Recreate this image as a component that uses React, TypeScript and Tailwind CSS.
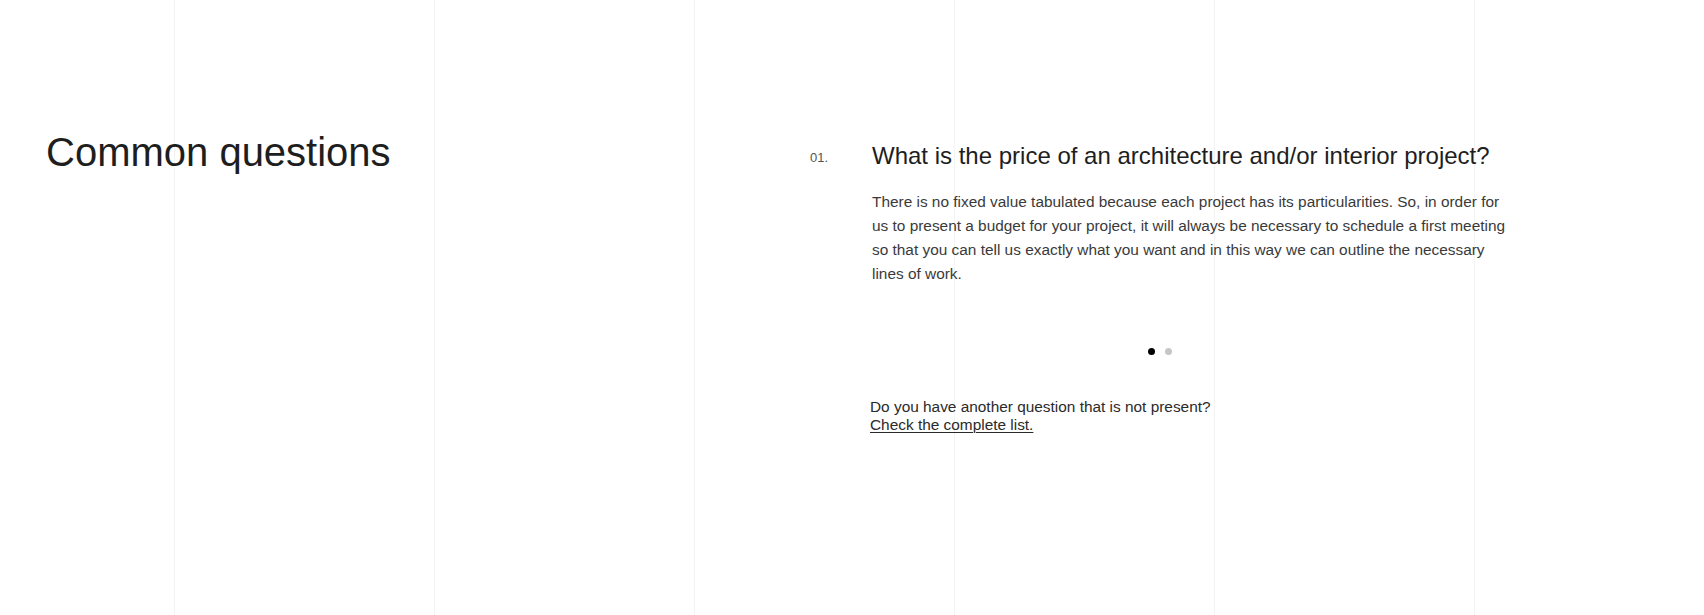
import React from "react";

const font = { fontFamily: '"Liberation Sans", Arial, sans-serif' };

export default function App() {
  return (
    <div className="relative w-full h-[615px] bg-white overflow-hidden" style={font}>
      {/* decorative grid lines behind the content */}
      <div className="absolute inset-0 flex pl-[174px] pointer-events-none">
        <div className="w-[260px] shrink-0 border-l border-[#f3f3f3]" />
        <div className="w-[260px] shrink-0 border-l border-[#f3f3f3]" />
        <div className="w-[260px] shrink-0 border-l border-[#f3f3f3]" />
        <div className="w-[260px] shrink-0 border-l border-[#f3f3f3]" />
        <div className="w-[260px] shrink-0 border-l border-[#f3f3f3]" />
        <div className="w-[260px] shrink-0 border-l border-[#f3f3f3]" />
      </div>

      <div className="relative flex pt-[128px] pl-[46px]">
        <div className="w-[764px] shrink-0">
          <h2 className="text-[40px] leading-[48px] text-[#1e1e1e] font-normal">Common questions</h2>
        </div>

        <div className="w-[700px] shrink-0 pt-[14px]">
          <div className="flex items-start">
            <span className="w-[62px] shrink-0 text-[13px] leading-[32px] text-[#555]">01.</span>
            <div className="w-[638px]">
              <h3 className="text-[24px] leading-[28.8px] text-[#1e1e1e] font-normal">
                What is the price of an architecture and/or interior project?
              </h3>
              <p className="mt-[19px] text-[15.4px] leading-[24px] text-[#3a3a3a]">
                There is no fixed value tabulated because each project has its particularities. So, in order for
                us to present a budget for your project, it will always be necessary to schedule a first meeting
                so that you can tell us exactly what you want and in this way we can outline the necessary lines
                of work.
              </p>
            </div>
          </div>

          <div className="mt-[62px] flex justify-center gap-[10px]">
            <span className="block w-[7px] h-[7px] rounded-full bg-black" />
            <span className="block w-[7px] h-[7px] rounded-full bg-[#c6c6c6]" />
          </div>

          <div className="mt-[43px] pl-[60px] text-[15.4px] leading-[18px] text-[#2a2a2a]">
            <p>Do you have another question that is not present?</p>
            <a href="#" className="underline underline-offset-2 decoration-1 text-[#2a2a2a]">
              Check the complete list.
            </a>
          </div>
        </div>
      </div>
    </div>
  );
}
